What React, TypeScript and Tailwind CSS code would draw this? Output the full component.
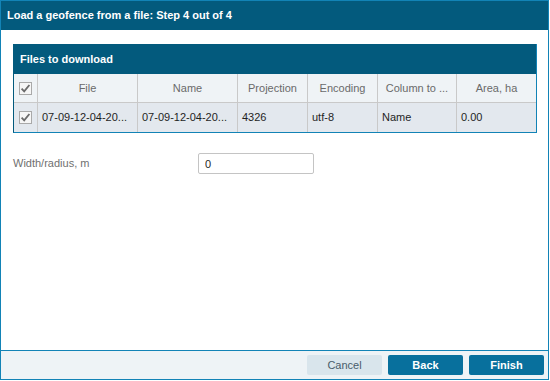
import React from 'react'

const cols = ['File', 'Name', 'Projection', 'Encoding', 'Column to ...', 'Area, ha']
const row = ['07-09-12-04-20...', '07-09-12-04-20...', '4326', 'utf-8', 'Name', '0.00']

function Check() {
  return (
    <svg width="13" height="13" viewBox="0 0 13 13" className="block">
      <rect x="0.5" y="0.5" width="12" height="12" fill="#f6f6f6" stroke="#a9a9a9" />
      <path d="M2.6 6.6 L5.2 9.4 L10.4 3" fill="none" stroke="#6b6b6b" strokeWidth="1.8" />
    </svg>
  )
}

export default function App() {
  return (
    <div className="w-[550px] h-[381px] bg-white font-['Liberation_Sans',Arial,sans-serif]">
      <div className="w-[549px] h-[380px] border border-[#1283b6] flex flex-col">
        {/* title bar */}
        <div className="h-[29px] shrink-0 bg-[#035a7d] text-white text-[11px] font-bold px-[6px] flex items-center">
          Load a geofence from a file: Step 4 out of 4
        </div>

        <div className="flex-1 pl-[12px] pt-[14px]">
          {/* files panel */}
          <div className="w-[524px] border border-[#1283b6] border-t-0 border-l-[#035a7d]">
            <div className="h-[30px] bg-[#035a7d] text-white text-[11px] font-bold px-[6px] flex items-center">
              Files to download
            </div>
            <div className="grid grid-cols-[24px_100px_100px_70px_70px_79px_1fr] text-[11px]">
              <div className="h-[29px] bg-[#eff3f6] border-r border-b border-[#c9c9c9] flex items-center justify-center">
                <Check />
              </div>
              {cols.map((c, i) => (
                <div
                  key={c}
                  className={`h-[29px] bg-[#eff3f6] border-b border-[#c9c9c9] text-[#6a6a6a] flex items-center justify-center whitespace-nowrap overflow-hidden ${i < cols.length - 1 ? 'border-r' : ''}`}
                >
                  {c}
                </div>
              ))}
              <div className="h-[29px] bg-[#e3e8ee] border-r border-[#c9c9c9] flex items-center justify-center">
                <Check />
              </div>
              {row.map((c, i) => (
                <div
                  key={i}
                  className={`h-[29px] bg-[#e3e8ee] border-[#c9c9c9] text-[#1f1f1f] flex items-center px-[4px] whitespace-nowrap overflow-hidden ${i < row.length - 1 ? 'border-r' : ''}`}
                >
                  {c}
                </div>
              ))}
            </div>
          </div>

          {/* width field */}
          <div className="flex items-center mt-[20px]">
            <span className="w-[185px] text-[11px] text-[#707070]">Width/radius, m</span>
            <input
              defaultValue="0"
              className="w-[116px] h-[21px] border border-[#c4c4c4] rounded-[2px] px-[6px] text-[11px] text-[#1f1f1f] outline-none"
            />
          </div>
        </div>

        {/* footer */}
        <div className="h-[29px] shrink-0 border-t border-[#1283b6] bg-[#eef3f6] flex items-center justify-end gap-[6px] pr-[4px]">
          <button className="w-[75px] h-[20px] rounded-[2px] bg-[#d9e5ec] text-[#485c6a] text-[11px]">Cancel</button>
          <button className="w-[75px] h-[20px] rounded-[2px] bg-[#08709d] text-white font-bold text-[11px]">Back</button>
          <button className="w-[75px] h-[20px] rounded-[2px] bg-[#08709d] text-white font-bold text-[11px]">Finish</button>
        </div>
      </div>
    </div>
  )
}
